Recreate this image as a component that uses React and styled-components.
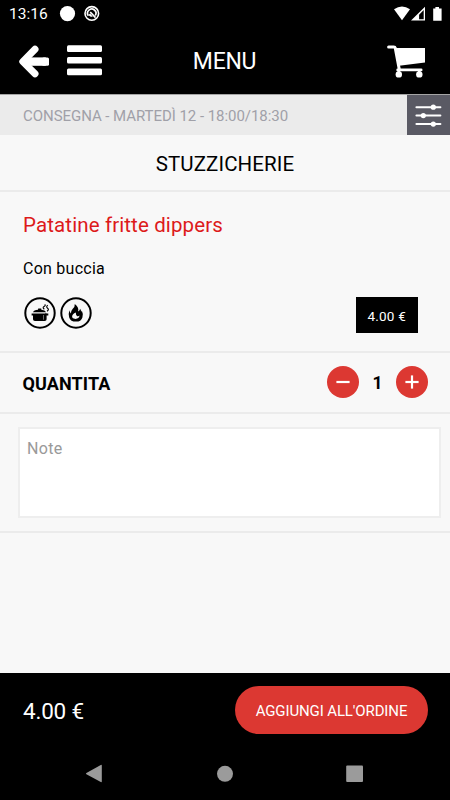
import React, { useState } from "react";
import styled, { createGlobalStyle } from "styled-components";

const GlobalStyle = createGlobalStyle`
  * {
    box-sizing: border-box;
  }
  body {
    margin: 0;
    background: #f8f8f8;
    font-family: Roboto, "Liberation Sans", sans-serif;
  }
  button {
    padding: 0;
    border: none;
    background: none;
    color: inherit;
    font-family: inherit;
    cursor: pointer;
  }
  svg {
    display: block;
    flex: none;
  }
`;

const Screen = styled.div`
  display: flex;
  flex-direction: column;
  width: 450px;
  height: 800px;
  overflow: hidden;
  background: #f8f8f8;
  color: #000;
`;

const Text = styled.span`
  display: block;
  white-space: nowrap;
  font-size: ${({ size }) => size}px;
  font-weight: ${({ weight }) => weight || 400};
  letter-spacing: ${({ spacing }) => spacing || 0}px;
  line-height: 24px;
`;

const StatusBar = styled.div`
  display: flex;
  align-items: center;
  height: 27px;
  padding: 0 7px 0 9px;
  background: #000;
  color: #fff;
  .clock {
    width: 50px;
    padding-top: 1px;
  }
  .system {
    margin-left: auto;
  }
`;

const Header = styled.header`
  display: grid;
  grid-template-columns: 150px 1fr 150px;
  align-items: center;
  height: 67px;
  background: #000;
  color: #fff;
  text-align: center;
  .left {
    display: flex;
    align-items: center;
    padding-left: 18px;
  }
  .menu {
    margin-left: 17px;
  }
  .title {
    padding: 2px 1px 0 0;
  }
  .cart {
    justify-self: end;
    margin-right: 24px;
  }
`;

const DeliveryBar = styled.div`
  display: flex;
  align-items: center;
  justify-content: space-between;
  height: 41px;
  padding-left: 23px;
  border-top: 1px solid #a5a5a5;
  background: #ebebeb;
  color: #a0a0a8;
  .slot {
    padding-top: 1px;
  }
`;

const FilterButton = styled.button`
  display: flex;
  align-items: center;
  justify-content: center;
  width: 43px;
  height: 40px;
  && {
    background: #5a5a64;
  }
`;

const Section = styled.section`
  height: ${({ height }) => height}px;
  border-bottom: 2px solid #ebebeb;
`;

const CategoryTitle = styled(Section)`
  display: flex;
  align-items: center;
  justify-content: center;
  padding-top: 2px;
`;

const Item = styled(Section)`
  padding: 21px 32px 0 23px;
  .name {
    color: #dd1a1a;
  }
  .description {
    margin-top: 20px;
  }
`;

const ItemFooter = styled.div`
  display: flex;
  align-items: center;
  justify-content: space-between;
  margin-top: 16px;
`;

const Badges = styled.div`
  display: flex;
  gap: 4px;
  margin: -4px 0 0 1px;
`;

const PriceTag = styled.div`
  display: flex;
  align-items: center;
  justify-content: center;
  width: 62.5px;
  height: 36px;
  padding-top: 2px;
  background: #000;
  color: #fff;
`;

const Quantity = styled(Section)`
  display: flex;
  align-items: center;
  justify-content: space-between;
  padding: 0 22px 0 22.5px;
  .label {
    padding-top: 2px;
  }
`;

const Stepper = styled.div`
  display: grid;
  grid-template-columns: 32px 37px 32px;
  align-items: center;
  margin-top: -1px;
  text-align: center;
  .value {
    padding-top: 2px;
  }
`;

const RoundButton = styled.button`
  display: flex;
  align-items: center;
  justify-content: center;
  width: 32px;
  height: 32px;
  border-radius: 50%;
  && {
    background: #dc3832;
  }
`;

const NoteSection = styled(Section)`
  padding: 13px 9px 0 18px;
`;

const NoteField = styled.textarea`
  display: block;
  width: 423px;
  height: 91px;
  padding: 10px 7px;
  border: 2px solid #eeeeee;
  border-radius: 0;
  outline: 0;
  resize: none;
  background: #fff;
  font-family: inherit;
  font-size: 16px;
  letter-spacing: 0.3px;
  line-height: 20px;
  &::placeholder {
    color: #999;
    opacity: 1;
  }
`;

const OrderBar = styled.footer`
  display: flex;
  align-items: center;
  justify-content: space-between;
  height: 75px;
  margin-top: auto;
  padding: 0 22px 1px 23px;
  background: #000;
  color: #fff;
  .total {
    padding-top: 2px;
  }
`;

const OrderButton = styled.button`
  display: flex;
  align-items: center;
  justify-content: center;
  width: 193px;
  height: 48px;
  border-radius: 24px;
  && {
    padding-top: 1px;
    background: #dc3832;
    color: #fff;
  }
`;

const NavBar = styled.nav`
  display: flex;
  justify-content: space-between;
  height: 52px;
  padding: 16px 86px 0 85px;
  background: #000;
  color: #9b9b9b;
`;

const NotificationIcons = () => (
  <svg width="44" height="20" viewBox="0 0 44 20" fill="none">
    <circle cx="8.5" cy="9.6" r="7.6" fill="#fff" />
    <circle cx="32.8" cy="9.4" r="6.8" stroke="#fff" strokeWidth="1.6" />
    <path
      d="M29.4 11.8a4.2 4.2 0 1 1 6.9-.3M31.2 8l5.3 5.6"
      stroke="#fff"
      strokeWidth="1.7"
    />
    <path d="M29.6 10.8a3 3 0 0 0 4.2 1.6l-2.7-2.9z" fill="#fff" />
  </svg>
);

const SystemIcons = () => (
  <svg
    className="system"
    width="50"
    height="20"
    viewBox="393 3 50 20"
    fill="#fff"
  >
    <path d="M394 8.2q8-5.2 16 0L402 19.2z" />
    <path fillRule="evenodd" d="M425 5.8v13.8h-14zM423.7 9v9.2h-4.6v-4.4z" />
    <path d="M433.2 7.4h2.2V6h3.6v1.4h2.6v12.4h-8.4z" />
  </svg>
);

const BackIcon = () => (
  <svg width="32" height="34" viewBox="0 0 32 34" fill="none" stroke="#fff">
    <path d="M7 17.6h20.8" strokeWidth="8.4" />
    <rect x="24" y="13.4" width="7" height="8.4" rx="1.6" fill="#fff" stroke="none" />
    <path
      d="M17 5.3L4.8 17.6 17 29.8"
      strokeWidth="7"
      strokeLinecap="round"
      strokeLinejoin="round"
    />
  </svg>
);

const MenuIcon = () => (
  <svg className="menu" width="35" height="31" viewBox="0 0 35 31" fill="#fff">
    <rect y="0.3" width="35" height="6.7" rx="1.5" />
    <rect y="12.1" width="35" height="6.3" rx="1.5" />
    <rect y="23.6" width="35" height="6.7" rx="1.5" />
  </svg>
);

const CartIcon = () => (
  <svg className="cart" width="39" height="34" viewBox="387 44 39 34" fill="#fff">
    <path
      d="M388.6 46.9h5.2q1.2 0 1.5 1.2L399.4 70"
      fill="none"
      stroke="#fff"
      strokeWidth="3"
      strokeLinecap="round"
    />
    <path d="M395.4 48H425v14.4l-25.8 3.4z" />
    <path
      d="M397.6 69.9h23.6"
      fill="none"
      stroke="#fff"
      strokeWidth="2.6"
      strokeLinecap="round"
    />
    <circle cx="398.8" cy="74.4" r="3.2" />
    <circle cx="419.3" cy="74.4" r="3.2" />
    <path d="M397.5 70h2.6v3h-2.6zM418 70h2.6v3H418z" />
  </svg>
);

const SlidersIcon = () => (
  <svg width="27" height="23" viewBox="0 0 27 23" fill="#fff">
    <path
      d="M1.4 3.2h24M1.4 11.6h24M1.4 20.1h24"
      stroke="#fff"
      strokeWidth="2"
      strokeLinecap="round"
    />
    <circle cx="18.3" cy="3.2" r="2.6" />
    <circle cx="8.3" cy="11.6" r="2.6" />
    <circle cx="18.3" cy="20.1" r="2.6" />
  </svg>
);

const PotBadge = () => (
  <svg width="32" height="32" viewBox="0 0 32 32">
    <circle cx="16" cy="16" r="14.7" fill="none" stroke="#000" strokeWidth="2" />
    <path d="M8.4 16.5h14.2v5.7q0 1.8-2 1.8H11q-2 0-2-1.8v-3.6H7.6v-2z" />
    <path d="M21 16.6h3.3v1.8H21zM9 15.2q.8-2.2 5-2.5l.2-1.2h3l.2 1.2q3.7.3 4.8 2.5z" />
    <path d="M19.6 18v4.7" stroke="#f8f8f8" strokeWidth="0.8" opacity="0.6" />
    <path
      d="M20.3 12.2q-2.2-1.7-.2-2.8t.6-2M23 14.2q2.5-1.5.6-3t.2-3.1"
      fill="none"
      stroke="#000"
      strokeWidth="1.1"
    />
  </svg>
);

const FlameBadge = () => (
  <svg width="32" height="32" viewBox="0 0 32 32">
    <circle cx="16" cy="16" r="14.7" fill="none" stroke="#000" strokeWidth="2" />
    <path d="M14.8 7q4.4 3.2 3.3 7.4 2-.8 2-2.6 1.2 1.6.9 3 .8-.4.8-1.4 1.8 3.6.6 7-1.3 4.2-6.3 4.2-5.7 0-6.9-4.2-1-3.8.2-7.2.6 2.4 1.5 3.2-.2-2.2 1.7-4.4 2.5-2.2 2.2-5z" />
    <path
      d="M15.8 15.6q-3.5 1.3-3.7 4 .1 2.2 3.3 2.3 3.6 0 4.2-3.3-1.3 1-2.3.6-1.6-.8-1.5-3.6z"
      fill="#f8f8f8"
    />
  </svg>
);

const StepIcon = ({ plus }) => (
  <svg width="14" height="14" viewBox="0 0 14 14" stroke="#fff" strokeWidth="2.2">
    <path d="M.4 7h13.2" />
    {plus && <path d="M7 .4v13.2" />}
  </svg>
);

const App = () => {
  const [quantity, setQuantity] = useState(1);
  const total = (quantity * 4).toFixed(2) + " €";

  return (
    <Screen>
      <GlobalStyle />
      <StatusBar>
        <Text className="clock" size={15.5}>13:16</Text>
        <NotificationIcons />
        <SystemIcons />
      </StatusBar>
      <Header>
        <div className="left">
          <BackIcon />
          <MenuIcon />
        </div>
        <Text className="title" size={23} spacing={-0.3}>MENU</Text>
        <CartIcon />
      </Header>
      <DeliveryBar>
        <Text className="slot" size={15} spacing={-0.05}>
          CONSEGNA - MARTEDÌ 12 - 18:00/18:30
        </Text>
        <FilterButton>
          <SlidersIcon />
        </FilterButton>
      </DeliveryBar>
      <CategoryTitle height={57}>
        <Text size={20.5} spacing={0.1}>STUZZICHERIE</Text>
      </CategoryTitle>
      <Item height={161}>
        <Text className="name" size={20.5} spacing={0.12}>
          Patatine fritte dippers
        </Text>
        <Text className="description" size={16} spacing={0.25}>
          Con buccia
        </Text>
        <ItemFooter>
          <Badges>
            <PotBadge />
            <FlameBadge />
          </Badges>
          <PriceTag>
            <Text size={13.5} spacing={0.2}>4.00 €</Text>
          </PriceTag>
        </ItemFooter>
      </Item>
      <Quantity height={61}>
        <Text className="label" size={18} weight={700} spacing={0.1}>QUANTITA</Text>
        <Stepper>
          <RoundButton onClick={() => setQuantity(Math.max(1, quantity - 1))}>
            <StepIcon />
          </RoundButton>
          <Text className="value" size={17.5} weight={700}>{quantity}</Text>
          <RoundButton onClick={() => setQuantity(quantity + 1)}>
            <StepIcon plus />
          </RoundButton>
        </Stepper>
      </Quantity>
      <NoteSection height={119}>
        <NoteField placeholder="Note" />
      </NoteSection>
      <OrderBar>
        <Text className="total" size={22.5} spacing={-0.2}>{total}</Text>
        <OrderButton>
          <Text size={15} spacing={-0.12}>AGGIUNGI ALL'ORDINE</Text>
        </OrderButton>
      </OrderBar>
      <NavBar>
        <svg width="18" height="19" viewBox="0 0 18 19" fill="currentColor">
          <path d="M1.4 8.9L15.8.9q1-.4 1 .6v16q0 1-1 .6L1.4 10.3q-1-.7 0-1.4z" />
        </svg>
        <svg width="18" height="19" viewBox="0 0 18 19" fill="currentColor">
          <circle cx="9" cy="9.8" r="8" />
        </svg>
        <svg width="18" height="19" viewBox="0 0 18 19" fill="currentColor">
          <rect x="0.2" y="1.4" width="16.8" height="16.6" rx="1" />
        </svg>
      </NavBar>
    </Screen>
  );
};

export default App;
